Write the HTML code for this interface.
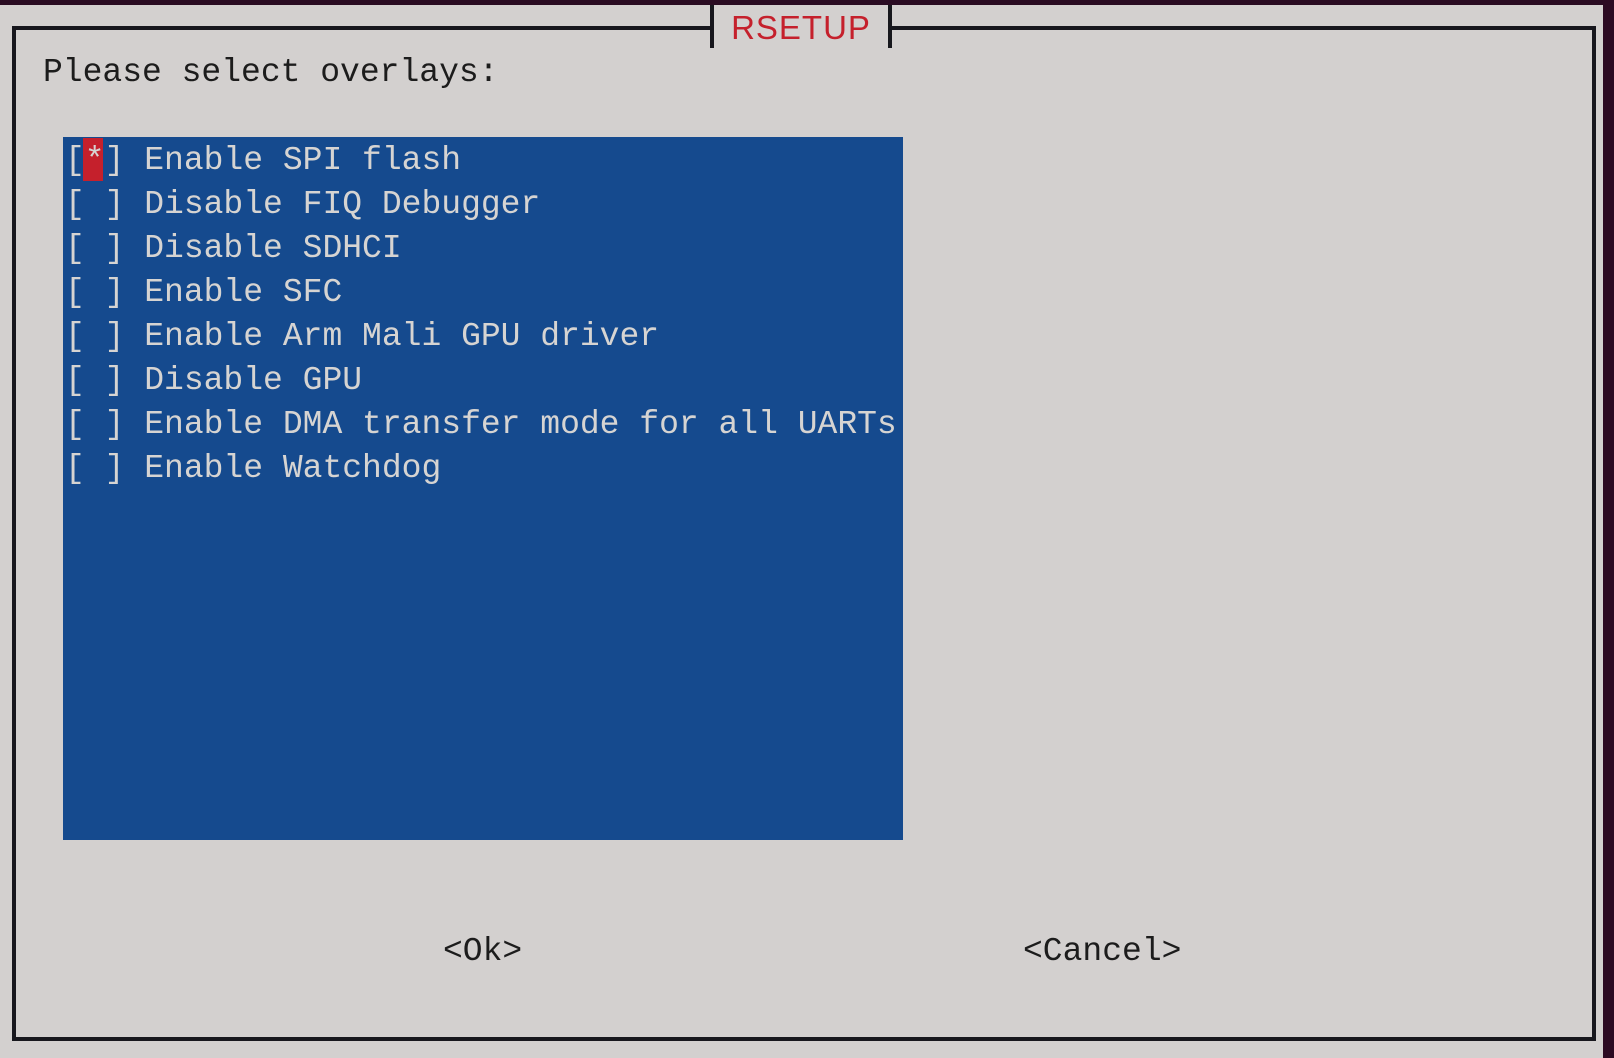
<!DOCTYPE html>
<html><head><meta charset="utf-8"><style>
html,body{margin:0;padding:0}
body{width:1614px;height:1058px;background:#d3d0cf;position:relative;overflow:hidden;font-family:"Liberation Mono","DejaVu Sans Mono",monospace;}
.a{position:absolute}
.t{position:absolute;font-size:33px;line-height:44px;white-space:pre;color:#1c1c1c}
.l{position:absolute;left:65px;font-size:33px;line-height:44px;white-space:pre;color:#d6d4d2}
</style></head><body>
<div class="a" style="left:0;top:0;width:1614px;height:5px;background:#2a0b22"></div>
<div class="a" style="left:1603px;top:0;width:11px;height:1058px;background:#2c0a22"></div>
<div class="a" style="left:12px;top:26px;width:1576px;height:1007px;border:4px solid #17171d"></div>
<div class="a" style="left:710px;top:5px;width:182px;height:43px;background:#d3d0cf;border-left:4px solid #17171d;border-right:4px solid #17171d;box-sizing:border-box"></div>
<div class="a" style="left:714px;top:6px;width:174px;text-align:center;font-family:'Liberation Sans Narrow','Liberation Sans','DejaVu Sans',sans-serif;font-size:33px;line-height:44px;color:#c5202c;letter-spacing:1px">RSETUP</div>
<div class="t" style="left:43px;top:51px">Please select overlays:</div>
<div class="a" style="left:63px;top:137px;width:840px;height:703px;background:#154a8e"></div>
<div class="a" style="left:83px;top:138px;width:20px;height:43px;background:#c5202c"></div>
<div class="l" style="top:139px">[*] Enable SPI flash</div>
<div class="l" style="top:183px">[ ] Disable FIQ Debugger</div>
<div class="l" style="top:227px">[ ] Disable SDHCI</div>
<div class="l" style="top:271px">[ ] Enable SFC</div>
<div class="l" style="top:315px">[ ] Enable Arm Mali GPU driver</div>
<div class="l" style="top:359px">[ ] Disable GPU</div>
<div class="l" style="top:403px">[ ] Enable DMA transfer mode for all UARTs</div>
<div class="l" style="top:447px">[ ] Enable Watchdog</div>
<div class="t" style="left:443px;top:930px">&lt;Ok&gt;</div>
<div class="t" style="left:1023px;top:930px">&lt;Cancel&gt;</div>
</body></html>
